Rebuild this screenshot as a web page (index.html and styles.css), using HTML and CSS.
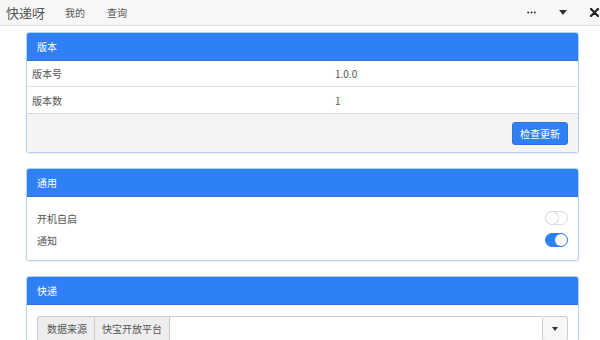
FILE: index.html
```html
<!DOCTYPE html>
<html lang="zh-CN">
<head>
    <meta charset="UTF-8">
    <title>快递呀</title>
    <link rel="stylesheet" href="styles.css">
</head>
<body>

    <!-- 顶栏 -->
    <nav class="topbar">
        <div class="brand">快递呀</div>
        <a class="nav-item">我的</a>
        <a class="nav-item">查询</a>
        <div class="win-btns">
            <span class="win-btn">
                <svg width="9" height="3" viewBox="0 0 9 3"><circle cx="1.2" cy="1.5" r="1" fill="#333"/><circle cx="4.5" cy="1.5" r="1" fill="#333"/><circle cx="7.8" cy="1.5" r="1" fill="#333"/></svg>
            </span>
            <span class="win-btn">
                <svg width="8" height="5" viewBox="0 0 8 5"><path d="M0 0 H8 L4 5 Z" fill="#333"/></svg>
            </span>
            <span class="win-btn">
                <svg width="9" height="9" viewBox="0 0 9 9"><path d="M1 1 L8 8 M8 1 L1 8" stroke="#222" stroke-width="2.2" stroke-linecap="round"/></svg>
            </span>
        </div>
    </nav>

    <div class="content">

        <!-- 版本 -->
        <div class="panel">
            <div class="panel-heading">版本</div>
            <table class="info-table">
                <tr><td class="label">版本号</td><td>1.0.0</td></tr>
                <tr><td class="label">版本数</td><td>1</td></tr>
            </table>
            <div class="panel-footer">
                <button class="btn-primary">检查更新</button>
            </div>
        </div>

        <!-- 通用 -->
        <div class="panel">
            <div class="panel-heading">通用</div>
            <div class="panel-body settings">
                <div class="setting-row">
                    <span>开机自启</span>
                    <span class="switch"></span>
                </div>
                <div class="setting-row">
                    <span>通知</span>
                    <span class="switch on"></span>
                </div>
            </div>
        </div>

        <!-- 快递 -->
        <div class="panel">
            <div class="panel-heading">快递</div>
            <div class="panel-body source">
                <div class="input-group">
                    <span class="addon">数据来源</span>
                    <span class="addon">快宝开放平台</span>
                    <span class="fill"></span>
                    <button class="caret-btn">
                        <svg width="6" height="4" viewBox="0 0 6 4"><path d="M0 0 H6 L3 4 Z" fill="#333"/></svg>
                    </button>
                </div>
            </div>
        </div>

    </div>
</body>
</html>
```

FILE: styles.css
```css
/* 全局样式 */
body {
    font-family: "Microsoft YaHei", "Noto Sans CJK SC", "Liberation Sans", sans-serif;
    font-size: 10px;
    color: #555;
    background: #fff;
    margin: 0;
    padding: 0;
    overflow: hidden;
}

/* 顶栏 */
.topbar {
    height: 25px;
    background: #f7f7f7;
    border-bottom: 1px solid #e3e3e3;
    display: flex;
    align-items: center;
    padding-left: 6px;
}

.brand {
    font-size: 13px;
    color: #555;
    margin-right: 20px;
}

.nav-item {
    color: #555;
    font-size: 10px;
    margin-right: 22px;
}

.win-btns {
    margin-left: auto;
    display: flex;
    align-items: center;
}

.win-btn {
    width: 32px;
    display: flex;
    justify-content: center;
    align-items: center;
}

.win-btn:last-child {
    width: 12px;
    margin-left: 9px;
}

/* 内容 */
.content {
    padding: 6px 21px 0 26px;
}

.panel {
    border: 1px solid #b3d3f5;
    border-radius: 3px;
    margin-bottom: 15px;
    box-shadow: 0 1px 2px rgba(0, 0, 0, 0.08);
    overflow: hidden;
}

.panel-heading {
    background: #2f80f4;
    color: #fff;
    height: 27px;
    line-height: 27px;
    padding-left: 10px;
    border-bottom: 1px solid #2a74dc;
}

/* 版本信息表 */
.info-table {
    width: 100%;
    border-collapse: collapse;
    table-layout: fixed;
}

.info-table td {
    height: 25px;
    padding: 0 5px;
    border-bottom: 1px solid #e4e4e4;
}

.info-table tr:last-child td {
    height: 26px;
    border-bottom: 1px solid #d8d8d8;
}

.info-table .label {
    width: 293px;
}

.panel-footer {
    background: #f4f4f4;
    height: 38px;
    display: flex;
    align-items: center;
    justify-content: flex-end;
    padding-right: 10px;
}

.btn-primary {
    background: #2f80f4;
    color: #fff;
    border: 1px solid #2a74dc;
    border-radius: 3px;
    font-family: inherit;
    font-size: 10px;
    width: 56px;
    height: 23px;
    padding: 0;
}

/* 通用设置 */
.settings {
    padding: 10px 10px 9px;
}

.setting-row {
    height: 22px;
    display: flex;
    align-items: center;
    justify-content: space-between;
}

.switch {
    width: 21px;
    height: 12px;
    border: 1px solid #ddd;
    border-radius: 7px;
    background: #fff;
    position: relative;
}

.switch::after {
    content: "";
    position: absolute;
    left: 0;
    top: 0;
    width: 12px;
    height: 12px;
    border-radius: 50%;
    background: #fff;
    box-shadow: 0 0 1px 1px #ddd;
}

.switch.on {
    background: #2f80f4;
    border-color: #2f80f4;
}

.switch.on::after {
    left: 9px;
    box-shadow: none;
}

/* 快递来源 */
.source {
    padding: 11px 10px 0;
}

.input-group {
    display: flex;
    height: 25px;
}

.addon {
    background: #eee;
    border: 1px solid #ccc;
    border-right: none;
    padding: 0 7px;
    display: flex;
    align-items: center;
    color: #555;
}

.addon:first-child {
    border-radius: 3px 0 0 0;
    padding: 0 7px 0 9px;
}

.fill {
    flex: 1;
    border-top: 1px solid #ccc;
    border-left: 1px solid #ccc;
}

.caret-btn {
    width: 26px;
    height: 25px;
    border: 1px solid #ccc;
    border-radius: 3px;
    background: #f7f7f7;
    padding: 0;
    display: flex;
    justify-content: center;
    align-items: center;
}
```
